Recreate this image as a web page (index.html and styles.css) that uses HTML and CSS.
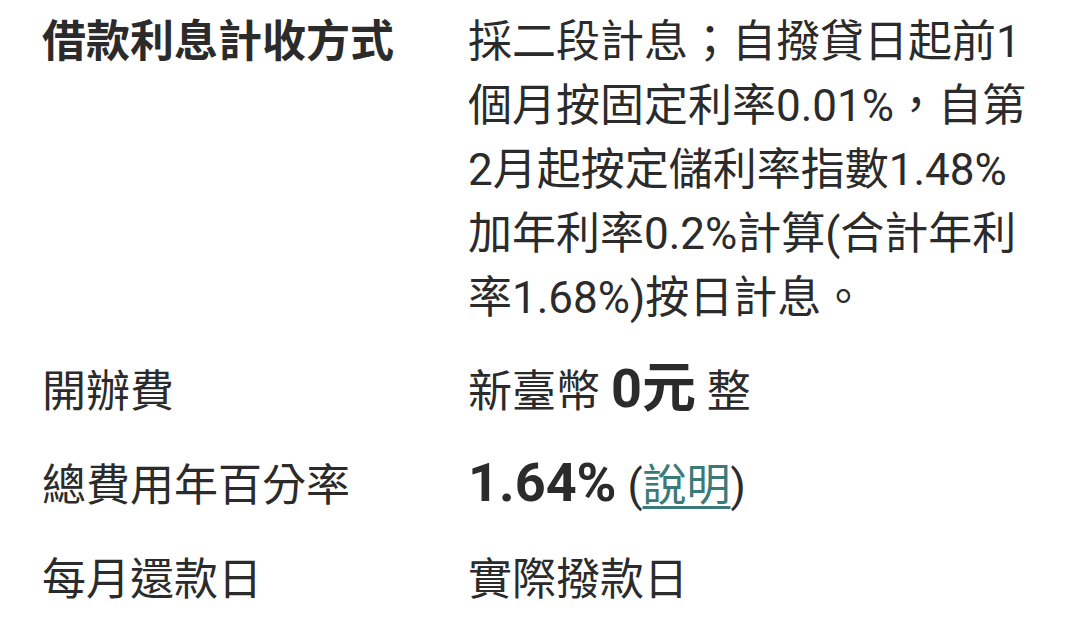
FILE: index.html
```html
<!DOCTYPE html>
<html lang="zh-Hant">
<head>
<meta charset="utf-8">
<link rel="stylesheet" href="styles.css">
</head>
<body>
<div class="list">
  <div class="row">
    <div class="label strong">借款利息計收方式</div>
    <div class="value">採二段計息；自撥貸日起前1個月按固定利率0.01%，自第2月起按定儲利率指數1.48%加年利率0.2%計算(合計年利率1.68%)按日計息。</div>
  </div>
  <div class="row">
    <div class="label">開辦費</div>
    <div class="value">新臺幣 <b class="big">0元</b> 整</div>
  </div>
  <div class="row">
    <div class="label">總費用年百分率</div>
    <div class="value"><b class="big">1.64%</b> (<a class="link" href="#">說明</a>)</div>
  </div>
  <div class="row">
    <div class="label">每月還款日</div>
    <div class="value">實際撥款日</div>
  </div>
</div>
</body>
</html>
```
FILE: styles.css
```css
html, body {
  margin: 0;
  padding: 0;
  background: #ffffff;
}
body {
  font-family: Roboto, "Noto Sans CJK TC", sans-serif;
  color: #2b2b2b;
  font-size: 44px;
  line-height: 64px;
}
.list {
  display: flex;
  flex-direction: column;
  gap: 30px;
  padding: 10px 0 0 42px;
}
.row {
  display: grid;
  grid-template-columns: 426px 572px;
}
.label.strong {
  font-weight: 700;
}
.big {
  font-weight: 700;
  font-size: 54px;
  line-height: 1;
}
.big-rate {
  letter-spacing: 1px;
}
.link {
  color: #3a7b79;
  text-decoration: underline;
  text-decoration-thickness: 3px;
  text-underline-offset: 5px;
}
```
